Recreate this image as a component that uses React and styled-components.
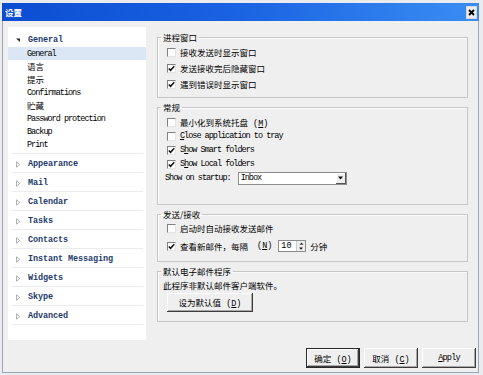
import React from "react";
import styled, { createGlobalStyle } from "styled-components";

const GlobalStyle = createGlobalStyle`
  html, body { margin: 0; padding: 0; background: #e9ebee; }
  body {
    font-family: "Liberation Mono", "Noto Sans CJK SC", monospace;
    font-size: 8.5px;
    color: #000;
  }
  * { box-sizing: border-box; }
`;

const Page = styled.div`
  width: 483px;
  height: 375px;
  padding: 3px 0 0 2px;
`;

const Window = styled.div`
  width: 477px;
  height: 370px;
  display: flex;
  flex-direction: column;
  background: #efefef;
  border: 1px solid #9ea6b0;
  border-top: 0;
`;

const TitleBar = styled.div`
  height: 18px;
  display: flex;
  align-items: center;
  justify-content: space-between;
  padding: 0 2px 0 3px;
  margin: 0 -1px;
  background: linear-gradient(to right, #0b4dd2 0%, #1a63e2 50%, #3a8df3 100%);
`;

const Title = styled.span`
  color: #fff;
  font-family: "Noto Sans CJK SC", sans-serif;
  font-weight: bold;
  font-size: 8.5px;
`;

const CloseButton = styled.div`
  width: 11px;
  height: 13px;
  display: flex;
  align-items: center;
  justify-content: center;
  background: #ececec;
  border: 1px solid #d8d8d8;
`;

const Body = styled.div`
  flex: 1;
  display: flex;
  flex-direction: column;
  padding: 6px 2px 0 5px;
`;

const Main = styled.div`
  height: 313px;
  display: flex;
  gap: 11px;
`;

const Sidebar = styled.div`
  width: 138px;
  background: #fff;
  padding-top: 6px;
`;

const HeaderRow = styled.div`
  height: 14px;
  display: flex;
  align-items: center;
  padding-left: 7px;
  gap: 7px;
`;

const HeaderText = styled.span`
  font-weight: bold;
  color: #1d3c6c;
  letter-spacing: -0.1px;
`;

const ChildRow = styled.div`
  height: 13px;
  display: flex;
  align-items: center;
  padding-left: 19px;
  background: ${p => (p.$selected ? "#dbe7f4" : "transparent")};
  letter-spacing: ${p => (p.$latin ? "-1px" : "0")};
`;

const Divider = styled.div`
  height: 1px;
  margin: 2px 3px 0 4px;
  background: #ececec;
`;

const CategoryRow = styled.div`
  height: 19px;
  display: flex;
  align-items: center;
  padding: 2px 0 0 3px;
  gap: 7px;
  margin: 0 3px 0 4px;
  border-bottom: 1px solid #ececec;
`;

const Content = styled.div`
  flex: 1;
  margin-right: 8px;
  display: flex;
  flex-direction: column;
  gap: 4px;
  padding-top: 5px;
`;

const Group = styled.fieldset`
  margin: 0;
  height: ${p => p.$h}px;
  padding: ${p => p.$pt || 0}px 8px 0 9px;
  border: 1px solid #c6c6c6;
  box-shadow: inset 1px 1px 0 #fbfbfb;
`;

const Legend = styled.legend`
  padding: 0 2px;
  margin-left: -6px;
  line-height: 10px;
  font-family: "Noto Sans CJK SC", sans-serif;
  font-size: 8.5px;
`;

const Row = styled.div`
  height: ${p => p.$h}px;
  display: flex;
  align-items: center;
  gap: 4px;
  white-space: nowrap;
`;

const Text = styled.span`
  letter-spacing: ${p => (p.$latin ? "-1px" : "0")};
  u { text-decoration: underline; }
`;

const Box = styled.span`
  width: 9px;
  height: 9px;
  display: flex;
  align-items: center;
  justify-content: center;
  background: #fdfdfd;
  border-top: 1px solid #808080;
  border-left: 1px solid #808080;
  border-right: 1px solid #e4e4e4;
  border-bottom: 1px solid #e4e4e4;
`;

const SelectBox = styled.div`
  width: 109px;
  height: 13px;
  margin-left: 3px;
  display: flex;
  align-items: center;
  justify-content: space-between;
  background: #fff;
  border: 1px solid #8c8c8c;
  padding-left: 2px;
  letter-spacing: -1px;
`;

const DropButton = styled.span`
  width: 10px;
  height: 11px;
  display: flex;
  align-items: center;
  justify-content: center;
  background: #eeeeee;
  box-shadow: inset -1px -1px 0 #555, inset 1px 1px 0 #fff;
`;

const Spinner = styled.div`
  width: 28px;
  height: 12px;
  margin-left: 2px;
  display: flex;
  justify-content: space-between;
  background: #fff;
  border: 1px solid #8c8c8c;
  padding-left: 2px;
  align-items: center;
`;

const SpinButtons = styled.span`
  width: 9px;
  height: 10px;
  display: flex;
  flex-direction: column;
  background: #eee;
  border-left: 1px solid #ccc;
`;

const SpinHalf = styled.span`
  flex: 1;
  display: flex;
  align-items: center;
  justify-content: center;
`;

const Button = styled.button`
  width: ${p => p.$w || 54}px;
  height: ${p => p.$h || 20}px;
  padding: 0;
  font: inherit;
  font-family: "Liberation Mono", "Noto Sans CJK SC", monospace;
  font-size: 8.5px;
  color: #000;
  background: #efefef;
  border: ${p => (p.$default ? "1px solid #2a2a2a" : "0")};
  box-shadow: inset -1px -1px 0 #3c3c3c, inset 1px 1px 0 #fff, inset -2px -2px 0 #a8a8a8;
  letter-spacing: ${p => (p.$latin ? "-0.8px" : "0")};
`;

const Footer = styled.div`
  display: flex;
  justify-content: flex-end;
  gap: 4px;
  padding-top: 8px;
`;

const DownArrow = () => (
  <svg width="6" height="6" viewBox="0 0 6 6">
    <polygon points="1,1.5 5,5 5,1.5" fill="#2a2a2a" />
  </svg>
);

const RightArrow = () => (
  <svg width="6" height="7" viewBox="0 0 6 7">
    <polygon points="1.5,0.8 4.8,3.5 1.5,6.2" fill="none" stroke="#a8a8a8" strokeWidth="0.9" />
  </svg>
);

const Check = () => (
  <svg width="7" height="7" viewBox="0 0 7 7">
    <polyline points="0.8,3.4 2.6,5.3 6.2,1.2" fill="none" stroke="#111" strokeWidth="1.5" />
  </svg>
);

const Caret = ({ size = 5 }) => (
  <svg width={size + 2} height={size - 1} viewBox="0 0 7 4">
    <polygon points="1,0.5 6,0.5 3.5,3.5" fill="#111" />
  </svg>
);

const Checkbox = ({ checked, children, latin }) => (
  <>
    <Box>{checked && <Check />}</Box>
    <Text $latin={latin}>{children}</Text>
  </>
);

const generalItems = [
  { label: "General", latin: true, selected: true },
  { label: "语言" },
  { label: "提示" },
  { label: "Confirmations", latin: true },
  { label: "贮藏" },
  { label: "Password protection", latin: true },
  { label: "Backup", latin: true },
  { label: "Print", latin: true },
];

const categories = [
  "Appearance",
  "Mail",
  "Calendar",
  "Tasks",
  "Contacts",
  "Instant Messaging",
  "Widgets",
  "Skype",
  "Advanced",
];

export default function App() {
  return (
    <Page>
      <GlobalStyle />
      <Window>
        <TitleBar>
          <Title>设置</Title>
          <CloseButton>
            <svg width="7" height="7" viewBox="0 0 7 7">
              <path d="M1 1 L6 6 M6 1 L1 6" stroke="#000" strokeWidth="1.8" />
            </svg>
          </CloseButton>
        </TitleBar>
        <Body>
          <Main>
            <Sidebar>
              <HeaderRow>
                <DownArrow />
                <HeaderText>General</HeaderText>
              </HeaderRow>
              {generalItems.map(item => (
                <ChildRow key={item.label} $selected={item.selected} $latin={item.latin}>
                  {item.label}
                </ChildRow>
              ))}
              <Divider />
              {categories.map(c => (
                <CategoryRow key={c}>
                  <RightArrow />
                  <HeaderText>{c}</HeaderText>
                </CategoryRow>
              ))}
            </Sidebar>
            <Content>
              <Group $h={66} $pt={2}>
                <Legend>进程窗口</Legend>
                <Row $h={16}><Checkbox>接收发送时显示窗口</Checkbox></Row>
                <Row $h={16}><Checkbox checked>发送接收完后隐藏窗口</Checkbox></Row>
                <Row $h={16}><Checkbox checked>遇到错误时显示窗口</Checkbox></Row>
              </Group>
              <Group $h={103} $pt={3}>
                <Legend>常规</Legend>
                <Row $h={14}><Checkbox>最小化到系统托盘 (<u>M</u>)</Checkbox></Row>
                <Row $h={14}><Checkbox latin><u>C</u>lose application to tray</Checkbox></Row>
                <Row $h={14}><Checkbox checked latin>S<u>h</u>ow Smart folders</Checkbox></Row>
                <Row $h={14}><Checkbox checked latin>S<u>h</u>ow Local folders</Checkbox></Row>
                <Row $h={14}>
                  <Text $latin style={{ marginLeft: -2 }}>Show on startup:</Text>
                  <SelectBox>
                    <span>Inbox</span>
                    <DropButton><Caret /></DropButton>
                  </SelectBox>
                </Row>
              </Group>
              <Group $h={53}>
                <Legend>发送/接收</Legend>
                <Row $h={18}><Checkbox>启动时自动接收发送邮件</Checkbox></Row>
                <Row $h={18}>
                  <Checkbox checked>查看新邮件，每隔</Checkbox>
                  <Text style={{ marginLeft: 5 }}>(<u>N</u>)</Text>
                  <Spinner>
                    <span>10</span>
                    <SpinButtons>
                      <SpinHalf><svg width="5" height="3" viewBox="0 0 5 3"><polygon points="0.5,2.8 4.5,2.8 2.5,0.5" fill="#333" /></svg></SpinHalf>
                      <SpinHalf><Caret size={4} /></SpinHalf>
                    </SpinButtons>
                  </Spinner>
                  <Text>分钟</Text>
                </Row>
              </Group>
              <Group $h={56} $pt={3}>
                <Legend>默认电子邮件程序</Legend>
                <Row $h={12} style={{ marginLeft: -4 }}><Text>此程序非默认邮件客户端软件。</Text></Row>
                <Row $h={23}>
                  <Button $w={86} $h={19}>设为默认值 (<u>D</u>)</Button>
                </Row>
              </Group>
            </Content>
          </Main>
          <Footer>
            <Button $default>确定 (<u>O</u>)</Button>
            <Button>取消 (<u>C</u>)</Button>
            <Button $latin><u>A</u>pply</Button>
          </Footer>
        </Body>
      </Window>
    </Page>
  );
}
